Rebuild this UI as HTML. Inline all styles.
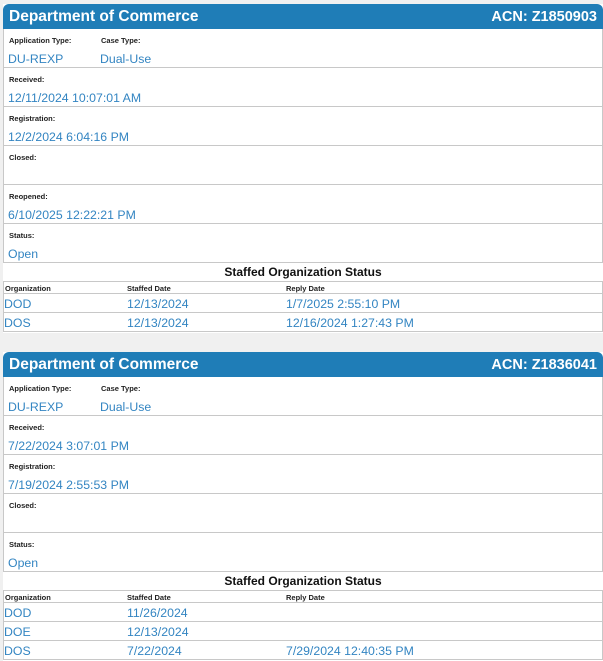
<!DOCTYPE html>
<html><head><meta charset="utf-8"><style>
*{margin:0;padding:0;box-sizing:border-box}
body{width:603px;height:661px;background:#f0f0f0;font-family:"Liberation Sans",sans-serif;position:relative;overflow:hidden}
.card{position:absolute;left:3px;width:600px;background:#fff}
.hdr{position:absolute;left:0;top:0;width:600px;height:25px;background:#1f7db7;border-radius:6px 6px 0 0;color:#fff;font-weight:bold;font-size:15.5px;line-height:26px;padding:0 6px}
.hdr span{float:right;font-size:14.5px}
.row{position:absolute;left:0;width:600px;border:1px solid #c8c8c8;border-top:none;height:39px}
.lbl{position:absolute;top:7px;font-size:7.5px;font-weight:bold;color:#222}
.val{position:absolute;top:23px;font-size:12.3px;color:#3385c2}
.title{position:absolute;left:0;width:600px;text-align:center;font-weight:bold;font-size:12px;color:#111}
.tr{position:absolute;left:0;width:600px;border:1px solid #c8c8c8;border-top:none}
.th{height:13px;border-top:1px solid #c8c8c8}
.th div{position:absolute;top:2px;font-size:7.5px;font-weight:bold;color:#222}
.td{height:19px}
.td div{position:absolute;top:3px;font-size:12.3px;color:#3385c2}
</style></head><body>

<div class="card" style="top:4px;height:329px">
<div class="hdr">Department of Commerce<span>ACN: Z1850903</span></div>
<div class="row" style="top:25px"><div class="lbl" style="left:5px">Application Type:</div><div class="lbl" style="left:97px">Case Type:</div><div class="val" style="left:4px">DU-REXP</div><div class="val" style="left:96px">Dual-Use</div></div>
<div class="row" style="top:64px"><div class="lbl" style="left:5px">Received:</div><div class="val" style="left:4px">12/11/2024 10:07:01 AM</div></div>
<div class="row" style="top:103px"><div class="lbl" style="left:5px">Registration:</div><div class="val" style="left:4px">12/2/2024 6:04:16 PM</div></div>
<div class="row" style="top:142px"><div class="lbl" style="left:5px">Closed:</div></div>
<div class="row" style="top:181px"><div class="lbl" style="left:5px">Reopened:</div><div class="val" style="left:4px">6/10/2025 12:22:21 PM</div></div>
<div class="row" style="top:220px"><div class="lbl" style="left:5px">Status:</div><div class="val" style="left:4px">Open</div></div>
<div class="title" style="top:261px">Staffed Organization Status</div>
<div class="tr th" style="top:277px"><div style="left:1px">Organization</div><div style="left:123px">Staffed Date</div><div style="left:282px">Reply Date</div></div>
<div class="tr td" style="top:290px"><div style="left:0">DOD</div><div style="left:123px">12/13/2024</div><div style="left:282px">1/7/2025 2:55:10 PM</div></div>
<div class="tr td" style="top:309px"><div style="left:0">DOS</div><div style="left:123px">12/13/2024</div><div style="left:282px">12/16/2024 1:27:43 PM</div></div>
</div>

<div class="card" style="top:352px;height:309px">
<div class="hdr">Department of Commerce<span>ACN: Z1836041</span></div>
<div class="row" style="top:25px"><div class="lbl" style="left:5px">Application Type:</div><div class="lbl" style="left:97px">Case Type:</div><div class="val" style="left:4px">DU-REXP</div><div class="val" style="left:96px">Dual-Use</div></div>
<div class="row" style="top:64px"><div class="lbl" style="left:5px">Received:</div><div class="val" style="left:4px">7/22/2024 3:07:01 PM</div></div>
<div class="row" style="top:103px"><div class="lbl" style="left:5px">Registration:</div><div class="val" style="left:4px">7/19/2024 2:55:53 PM</div></div>
<div class="row" style="top:142px"><div class="lbl" style="left:5px">Closed:</div></div>
<div class="row" style="top:181px"><div class="lbl" style="left:5px">Status:</div><div class="val" style="left:4px">Open</div></div>
<div class="title" style="top:222px">Staffed Organization Status</div>
<div class="tr th" style="top:238px"><div style="left:1px">Organization</div><div style="left:123px">Staffed Date</div><div style="left:282px">Reply Date</div></div>
<div class="tr td" style="top:251px"><div style="left:0">DOD</div><div style="left:123px">11/26/2024</div></div>
<div class="tr td" style="top:270px"><div style="left:0">DOE</div><div style="left:123px">12/13/2024</div></div>
<div class="tr td" style="top:289px"><div style="left:0">DOS</div><div style="left:123px">7/22/2024</div><div style="left:282px">7/29/2024 12:40:35 PM</div></div>
</div>

</body></html>
